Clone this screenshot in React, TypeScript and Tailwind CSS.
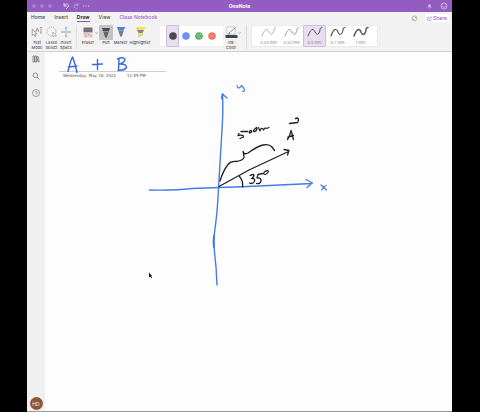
import type { ReactNode } from "react";

function Tool({ width, label, children, active = false }: { width: string; label: ReactNode; children: ReactNode; active?: boolean }) {
  return (
    <button type="button" aria-pressed={active} className={`flex shrink-0 flex-col items-center text-[4px] font-medium leading-[5px] text-[#555] ${width}`}>
      <span className={`flex w-[14px] items-center justify-center ${active ? "h-[15px] rounded-[1px] bg-[#c3c2c4]" : "mb-px h-[14px]"}`}>{children}</span>
      <span className="whitespace-nowrap text-center">{label}</span>
    </button>
  );
}

function Chevron() {
  return (
    <svg className="mt-[7px] h-[2px] w-[3px] shrink-0" viewBox="0 0 3 2" fill="none" stroke="#777" strokeWidth=".6">
      <path d="M.4.4 1.5 1.5 2.6.4" />
    </svg>
  );
}

function Divider() {
  return <div className="h-[24px] w-px shrink-0 bg-[#dddcdd]" />;
}

function Nib({ body, tip }: { body: string; tip: string }) {
  return (
    <svg className="h-[12px] w-[10px]" viewBox="0 0 10 12">
      <path d="M1 1H9L8 4H2Z" fill={body} />
      <path d="M2 4H8L5.8 10.5H4.2Z" fill={tip} />
      <path d="M2 4H8L7.6 5.4Q5 4.4 2.5 5.4Z" fill="#fff" opacity=".3" />
    </svg>
  );
}

const inks = [
  { name: "Black", fill: "#4a4b50" },
  { name: "Blue", fill: "#6b93f0" },
  { name: "Green", fill: "#5bae60" },
  { name: "Red", fill: "#ec7862" },
];

const sizes = [
  { label: "0.25 mm", stroke: 0.6 },
  { label: "0.35 mm", stroke: 0.8 },
  { label: "0.5 mm", stroke: 1 },
  { label: "0.7 mm", stroke: 1.2 },
  { label: "1 mm", stroke: 1.5 },
];

function TitleBar() {
  return (
    <header className="grid h-[12px] grid-cols-[1fr_auto_1fr] items-center bg-[#935cc0] text-white">
      <div className="flex items-center pl-[5px]">
        <div className="flex gap-[4px]">
          {["close", "minimize", "zoom"].map((n) => (
            <button key={n} type="button" aria-label={n} className="h-[4px] w-[4px] rounded-full bg-[#a682c5]" />
          ))}
        </div>
        <svg className="ml-[10px] h-[8px] w-[28px]" viewBox="0 0 28 8" fill="none" stroke="#e7d8f3" strokeWidth=".9">
          <path d="M2 1V4H5M2 4Q3 1.5 5.2 1.9Q7.5 2.8 6 5L4 7" />
          <path d="M16 1V3.5H13.5M16 3.5Q14 1 12.3 3Q11.5 6 14 6.5L16 5.8" opacity=".45" />
          <path d="M21 4H22.2M23.5 4H24.7M26 4H27.2" />
        </svg>
      </div>
      <h1 className="text-[5px] font-bold leading-[6px]">OneNote</h1>
      <div className="flex items-center justify-end gap-[8px] pr-[4px]">
        <svg className="h-[6px] w-[5px]" viewBox="0 0 5 6" fill="#cfb5e4">
          <path d="M.5 4.5Q1.2 4 1.2 2.5Q1.4 1 2.5 1Q3.600 1 3.800 2.5Q3.800 4 4.5 4.5ZM2 5H3V5.6H2Z" />
        </svg>
        <svg className="h-[8px] w-[8px]" viewBox="0 0 8 8" fill="none" stroke="#e2cff1" strokeWidth=".7">
          <circle cx="4" cy="4" r="3" />
          <path d="M2.300 4.500Q4 6.500 5.700 4.500M2.700 2.700V3.200M5.300 2.700V3.200" />
        </svg>
      </div>
    </header>
  );
}

function Tabs() {
  return (
    <nav className="flex h-[13px] items-start pl-[4px] pr-[3px] pt-[2px] text-[5px] font-medium leading-[7px] text-[#4a4a4a]">
      <div className="flex items-start gap-[9px]">
        <button type="button">Home</button>
        <button type="button">Insert</button>
        <button type="button" aria-current="page" className="border-b border-[#9355c4] font-bold text-[#333]">Draw</button>
        <button type="button">View</button>
        <button type="button" className="text-[#a05bd0]">Class Notebook</button>
      </div>
      <div className="ml-auto flex items-center gap-[7px]">
        <svg className="h-[7px] w-[7px]" viewBox="0 0 7 7" fill="none" stroke="#999" strokeWidth=".7">
          <path d="M1.200 5Q.3 2.200 3 1.100L4.500 1.200M5.800 2Q6.700 4.800 4 5.900L2.500 5.800M1 5.200H2.500V3.800M6 1.800H4.500V3.200" />
        </svg>
        <button type="button" className="flex h-[8px] w-[24px] items-center justify-center gap-px rounded-[1px] bg-white text-[#9c55cf]">
          <svg className="h-[5px] w-[5px]" viewBox="0 0 5 5" fill="none" stroke="#ad74d8" strokeWidth=".6">
            <path d="M2 1.500H.5V4.500H4V3M1.700 3.300Q2 1.400 4.500 1.400M3.500.4 4.600 1.400 3.500 2.400" />
          </svg>
          Share
        </button>
      </div>
    </nav>
  );
}

function Ribbon() {
  return (
    <div className="flex h-[27px] items-start border-b border-[#d2d1d2] pl-[3px]">
      <Tool width="w-[14px]" label={<>Text<br />Mode</>}>
        <svg className="h-[12px] w-[12px]" viewBox="0 0 12 12" fill="none" stroke="#888" strokeWidth=".7">
          <path d="M1.200 3V9.500L2.800 8.200 4 10.500 5 10 4 7.800H6Z" />
          <path d="M4.500 6 6.300 2 8 6M5.100 4.700H7.500M9 1.500H11M10 1.500V7M9 7H11" />
        </svg>
      </Tool>
      <Tool width="w-[15px]" label={<>Lasso<br />Select</>}>
        <svg className="h-[12px] w-[12px]" viewBox="0 0 12 12" fill="none" stroke="#999" strokeWidth=".7">
          <circle cx="5.500" cy="5.500" r="4.500" strokeDasharray="1.200 .8" />
          <path d="M7 6V11L8.500 9.800H10.500Z" fill="#fff" />
        </svg>
      </Tool>
      <Tool width="w-[14px]" label={<>Insert<br />Space</>}>
        <svg className="h-[12px] w-[12px]" viewBox="0 0 12 12" fill="none" stroke="#7fa9dd" strokeWidth=".8">
          <path d="M1 6H11" stroke="#888" />
          <path d="M6 5V1.200M4.600 2.500 6 1.200 7.400 2.500M6 7V10.800M4.600 9.500 6 10.800 7.400 9.500" />
        </svg>
      </Tool>
      <div className="w-[3px] shrink-0" />
      <Divider />
      <div className="w-[4px] shrink-0" />
      <Tool width="w-[14px]" label="Eraser">
        <svg className="h-[12px] w-[10px]" viewBox="0 0 10 12">
          <path d="M.5 1.500H9.500V6.500H.5Z" fill="#737176" />
          <path d="M.5 6.500H9.500V11.500H.5Z" fill="#e5ced1" />
          <path d="M1.500 8H3M5 8.500H6.500M7.500 10H9M2.500 10.200H4" stroke="#b39a9d" strokeWidth=".8" />
        </svg>
      </Tool>
      <Chevron />
      <div className="w-px shrink-0" />
      <Tool width="w-[14px]" label="Pen" active><Nib body="#4b4a4d" tip="#626164" /></Tool>
      <Tool width="w-[15px]" label="Marker"><Nib body="#4f7fe4" tip="#77777c" /></Tool>
      <Tool width="w-[24px]" label="Highlighter">
        <svg className="h-[12px] w-[11px]" viewBox="0 0 11 12">
          <path d="M.5 1H10.500L9.500 4H1.500Z" fill="#f2df5e" />
          <path d="M2 4H9L7.500 7V9.500L3.500 11V7Z" fill="#87868a" />
          <path d="M3.500 7H7.500V9.500L3.500 11Z" fill="#f0dc6a" />
        </svg>
      </Tool>
      <div className="ml-[8px] flex h-[22px] w-[63px] shrink-0 border-y border-[#f0eff0] bg-white pl-[6px]">
        {inks.map((ink, i) => (
          <button
            key={ink.name}
            type="button"
            aria-label={ink.name}
            className={`-my-px flex w-[13px] items-center justify-center ${i === 0 ? "rounded-[1px] border border-[#cfbddd] bg-[#e8deef]" : ""}`}
          >
            <svg className="h-[8px] w-[8px]" viewBox="0 0 8 8">
              <circle cx="4" cy="4" r="3.800" fill={ink.fill} />
              {i === 2 && <path d="M2 3H3.500M4.500 2.500H6M3 5H4.500M5 6H6" stroke="#c9efc8" strokeWidth=".8" />}
              {i === 3 && <path d="M2.500 4H5.500" stroke="#f4ad91" strokeWidth=".8" />}
            </svg>
          </button>
        ))}
      </div>
      <div className="w-px shrink-0" />
      <Tool width="w-[14px]" label={<>Ink<br />Color</>}>
        <svg className="h-[12px] w-[13px]" viewBox="0 0 13 12" fill="none">
          <path d="M2 1H10V8H2Z" fill="#fff" stroke="#aaa" strokeWidth=".6" />
          <path d="M4 7 10.500 1.500M4 7 3.500 8.200 5.200 7.500" stroke="#5e95c9" />
          <path d="M.5 9H12.500V12H.5Z" fill="#444548" />
        </svg>
      </Tool>
      <Chevron />
      <div className="w-[5px] shrink-0" />
      <Divider />
      <div className="ml-[4px] flex h-[22px] shrink-0 border border-[#ebeaeb] bg-white px-[5px]">
        {sizes.map((s, i) => (
          <button
            key={s.label}
            type="button"
            className={`-my-px flex w-[23px] flex-col items-center whitespace-nowrap text-[4px] leading-[5px] text-[#888] ${i === 2 ? "rounded-[1px] border border-[#cfbddd] bg-[#e8deef]" : "border border-transparent"}`}
          >
            <svg className="mb-px h-[13px] w-[16px]" viewBox="0 0 16 13" fill="none" stroke={i < 2 ? "#88878a" : "#59575c"} strokeWidth={s.stroke} strokeLinecap="round">
              <path d="M1 10Q3.500 3 6 3.500Q7.500 4 8.500 7Q10 10 12 7Q13 5.500 13.200 2.500Q14 1.500 15 1.500" />
            </svg>
            {s.label}
          </button>
        ))}
      </div>
    </div>
  );
}

function Sidebar() {
  return (
    <aside className="flex w-[18px] shrink-0 flex-col items-center bg-[#f1f0f1] pb-px pt-[3px]">
      <div className="flex flex-col gap-[9px]">
        <button type="button" aria-label="Notebooks">
          <svg className="h-[8px] w-[8px]" viewBox="0 0 8 8" fill="none" stroke="#777" strokeWidth=".8">
            <path d="M1 1H2.500V7H1ZM3 1H4.500V7H3ZM4.800 1.500 6 1.200 7.300 6.700 6 7Z" />
          </svg>
        </button>
        <button type="button" aria-label="Search">
          <svg className="h-[8px] w-[8px]" viewBox="0 0 8 8" fill="none" stroke="#777" strokeWidth=".8">
            <circle cx="3.300" cy="3.300" r="2.300" />
            <path d="M5 5 7.300 7.300" />
          </svg>
        </button>
        <button type="button" aria-label="Recent notes">
          <svg className="h-[8px] w-[8px]" viewBox="0 0 8 8" fill="none" stroke="#777" strokeWidth=".7">
            <circle cx="4" cy="4" r="3.500" />
            <path d="M4 2V4.200H5.700" />
          </svg>
        </button>
      </div>
      <button type="button" className="mt-auto flex h-[13px] w-[13px] items-center justify-center rounded-full bg-[#8f5632] text-[5px] font-medium leading-[6px] text-[#f0ddd0]">HD</button>
    </aside>
  );
}

function Ink() {
  return (
    <svg className="pointer-events-none absolute left-0 top-0 h-[359px] w-[407px]" viewBox="45 52 407 359" fill="none" strokeLinecap="round" strokeLinejoin="round">
      <g stroke="#3a68dc" strokeWidth="1.400">
        <path d="M68 71.500Q70 62 72.500 57Q75 63 77 72.500M68.500 67 77 66" />
        <path d="M92.500 64.500 102.500 64M97.500 59.500V69.500" />
        <path d="M119 59 118.500 70.500M117.500 59Q123 56.500 125 59Q125 62 120 64Q127 64 126.500 67.500Q124 71 118 70" />
      </g>
      <g stroke="#467be5" strokeWidth="1.400">
        <path d="M222.500 94Q223.500 111 221.500 138L218.500 188Q217.500 210 215.500 225Q213 241 214.500 252Q216.500 268 217 285" />
        <path d="M214 236Q213.200 242 214 247" strokeWidth="2" />
        <path d="M221.500 98.500 222.500 94 227 98" />
        <path d="M149.500 190Q175 190.500 192 188.500L248 186.500 312 183.500M306 179.500 312.500 183 307 187.500" />
        <path d="M237 85.500Q237.500 89 240 87.500L241.500 85.500 244 88.500Q245.500 91.500 242.500 91.500" strokeWidth="1.200" />
        <path d="M321 185 326.500 190M326 185.500Q323 187 321.500 190" strokeWidth="1.200" />
      </g>
      <g stroke="#202124" strokeWidth="1.300">
        <path d="M219 186.500 249 170 288.500 151.500M284 149.500 289 150.500 287.500 155" />
        <path d="M220 181Q223 171 228 164.500Q231 161 236 161.500Q242 161 244 157.500Q244 154 243 151.500Q244 155 248 153Q257 146.500 263 145Q269 143.500 272 147L274.500 150.500" />
        <path d="M239.500 176.500Q243.500 181 242.500 187" />
        <path d="M250 175.500Q254 173.500 254 175.500Q253.500 177.500 251.500 178.500Q255.500 178 254.500 181.500Q252.500 184.500 249.500 183" />
        <path d="M262.500 173.500 258 174.500 257 178Q261.500 177.500 261 181Q260 184.500 256.500 183.500" />
        <path d="M265 171.500Q262 174.500 265.500 174.500Q268.500 173 268.500 171Q267 170 265 171.500" strokeWidth="1.200" />
        <path d="M287.500 139.500Q290 136 291 130.500Q292.500 135 293.500 139.500M288 137 293.500 135.500" />
        <path d="M289.500 123.500 297.500 122.500Q299.500 119.500 297.500 118L295.500 118.500" />
        <path d="M239 133.500 238 135.500Q244 134.500 243.500 137L240 138.500M241 131.500 247.500 131.500" />
        <path d="M250.500 130.500Q248 132.500 250 133Q252.500 132 251.500 130.500M254.500 129Q252.500 132 255 131.500Q258 129.500 256.500 127.500L255.500 128.500" />
        <path d="M258.500 127.500 260 131Q261 127.500 262.500 128.500L263.500 130Q265 127 266.500 128.500L269 127.500" strokeWidth="1.200" />
      </g>
      <path d="M149 272.500V277.500L150.200 276.500 151.200 278.300 152 277.700 151.200 276H152Z" fill="#111" />
    </svg>
  );
}

function NotePage() {
  return (
    <main className="relative min-w-0 flex-1 overflow-hidden bg-[#fdfdfd] pl-[14px] pt-[19px]">
      <div className="flex w-[107px] gap-[11px] whitespace-nowrap border-t border-[#cdcdcd] pl-[4px] pt-px font-['DejaVu_Sans',sans-serif] text-[4px] leading-[6px] text-[#555]">
        <time>Wednesday, May 18, 2022</time>
        <span>11:55 PM</span>
      </div>
      <Ink />
    </main>
  );
}

export default function App() {
  return (
    <div className="flex min-h-screen bg-black pl-[27px] pr-[28px] font-['Inter',sans-serif]">
      <div className="flex min-w-0 flex-1 flex-col border-b border-[#999] bg-[#f3f2f3]">
        <TitleBar />
        <Tabs />
        <Ribbon />
        <div className="flex flex-1">
          <Sidebar />
          <NotePage />
        </div>
      </div>
    </div>
  );
}
